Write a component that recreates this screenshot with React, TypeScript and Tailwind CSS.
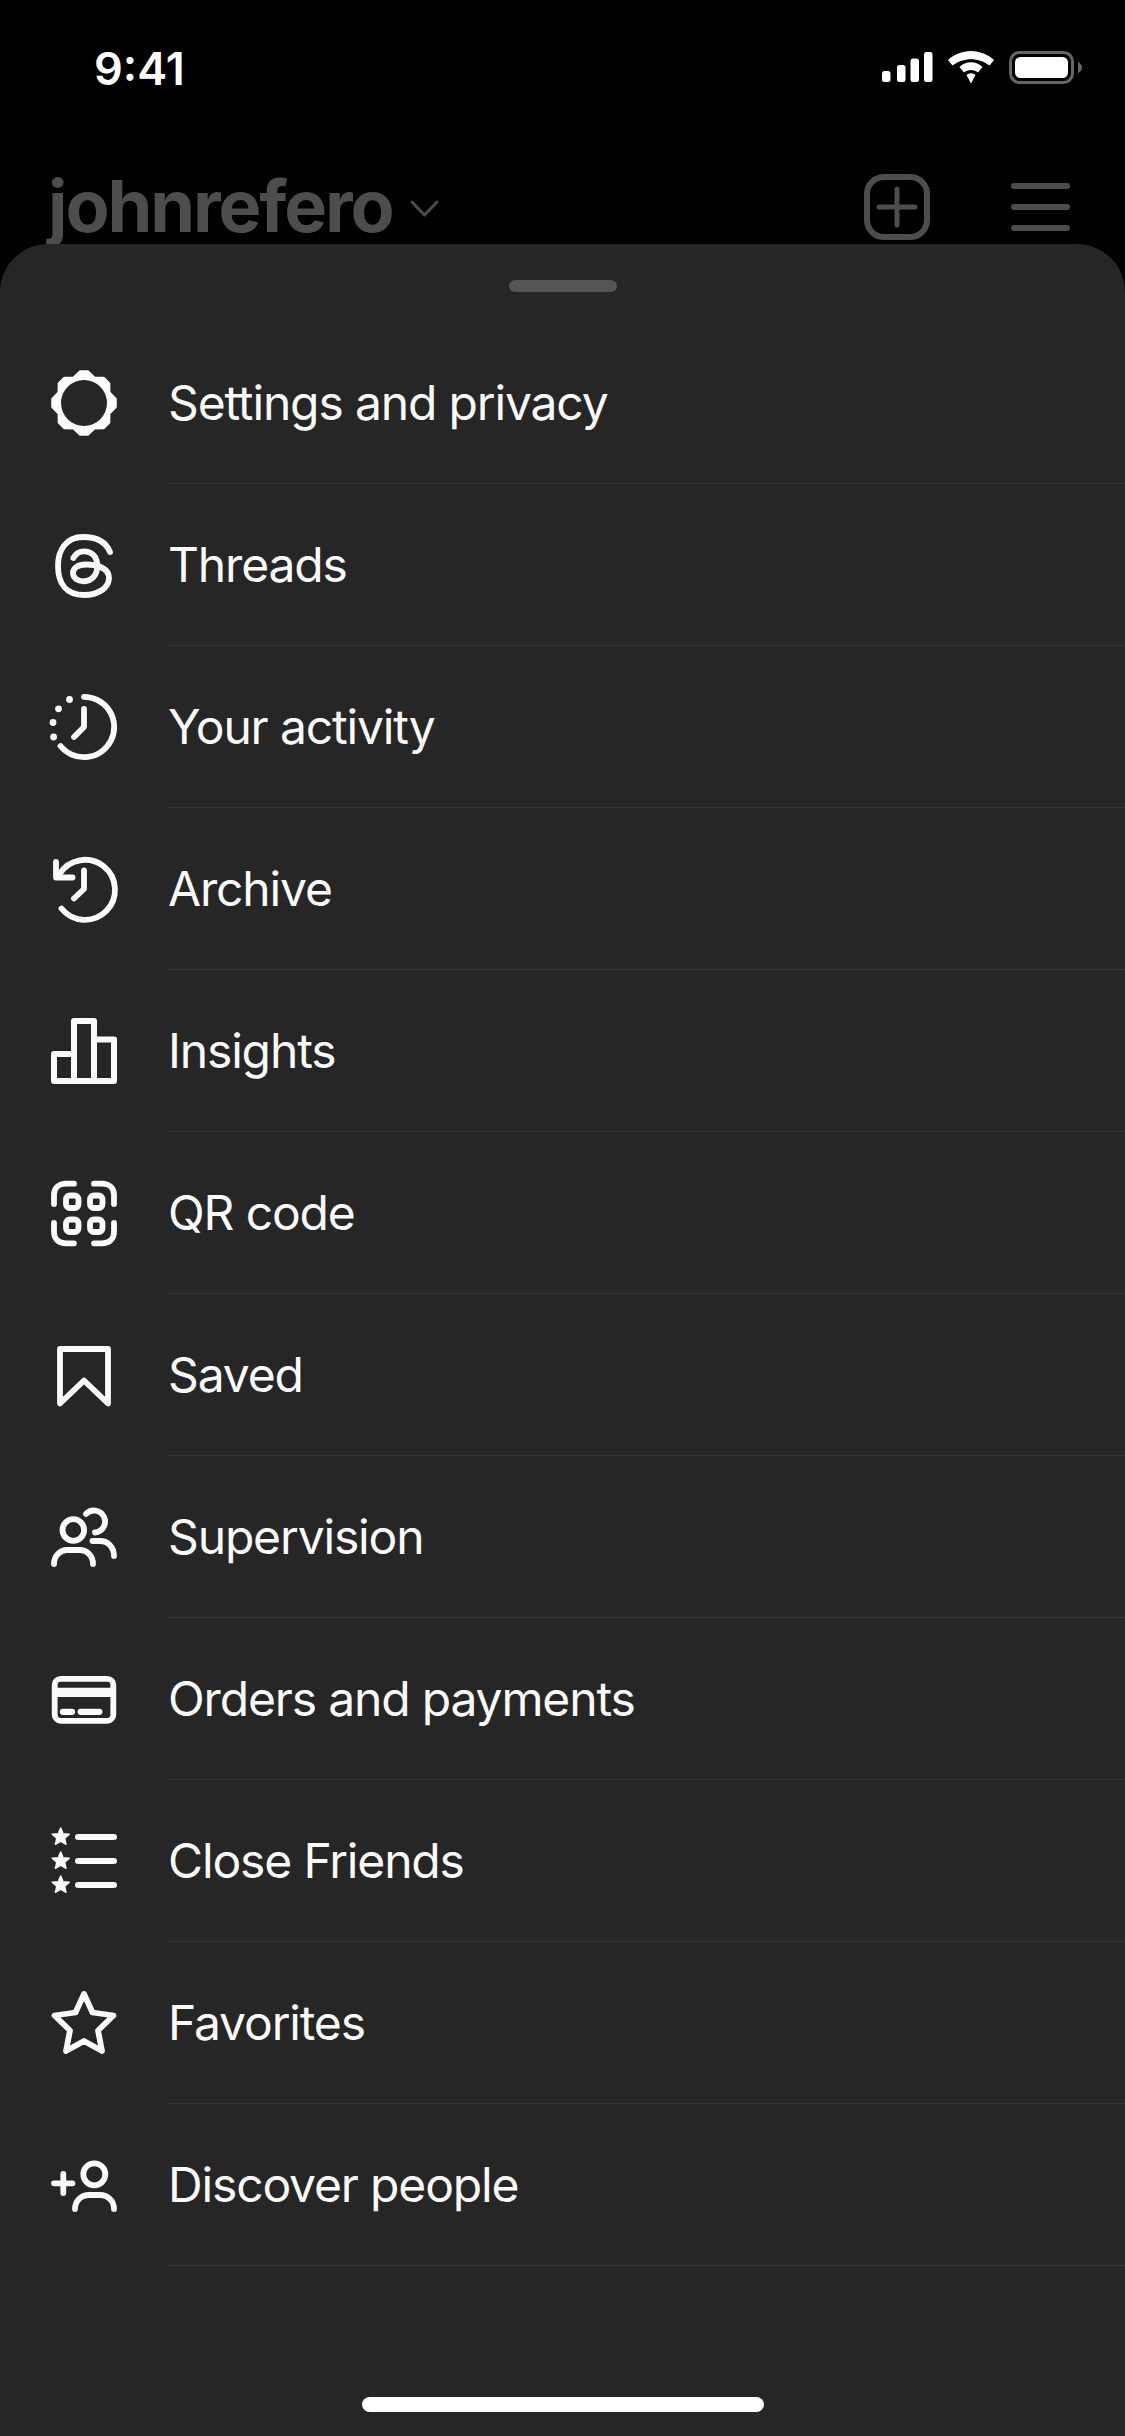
import React from "react";

const S = ({ children }: { children: React.ReactNode }) => (
  <svg width="66" height="66" viewBox="0 0 66 66" fill="none" stroke="#fafafa" strokeWidth="5.8" strokeLinecap="round" strokeLinejoin="round" className="shrink-0 overflow-visible">
    {children}
  </svg>
);

const starPts = (cx: number, cy: number, r: number) => {
  const pts: string[] = [];
  for (let i = 0; i < 10; i++) {
    const a = (-90 + i * 36) * (Math.PI / 180);
    const rr = i % 2 === 0 ? r : r * 0.45;
    pts.push(`${(cx + rr * Math.cos(a)).toFixed(2)},${(cy + rr * Math.sin(a)).toFixed(2)}`);
  }
  return pts.join(" ");
};

const gearPts = () => {
  const pts: string[] = [];
  const add = (deg: number, r: number) => {
    const a = (deg - 90) * (Math.PI / 180);
    pts.push(`${(33 + r * Math.cos(a)).toFixed(2)},${(33 + r * Math.sin(a)).toFixed(2)}`);
  };
  for (let i = 0; i < 8; i++) {
    const c = i * 45;
    add(c - 7, 31.5);
    add(c + 7, 31.5);
    add(c + 22.5, 27);
  }
  return pts.join(" ");
};

const icons: Record<string, React.ReactNode> = {
  settings: (
    <S>
      <polygon points={gearPts()} fill="#fafafa" strokeWidth="3" />
      <circle cx="33" cy="33" r="23" fill="#262626" stroke="none" />
    </S>
  ),
  threads: (
    <S>
      <path d="M59 20C55 10 45 5 32 5C15 5 7 18 7 34C7 51 15 63 33 63C47 63 58 56 58 46C58 37 48 32.500 35 32.500C27 32.500 22 36 22 41C22 46 27 49.300 32 49.300C41 49.300 46.300 43 46.300 34C46.300 25 41 19.300 33 19.300C28 19.300 24.500 22 22.300 26" />
    </S>
  ),
  activity: (
    <S>
      <path d="M33 2.800A30.200 30.200 0 1 1 9.500 52" />
      <path d="M33 15V33L23 43" />
      <g fill="#fafafa" stroke="none">
        <circle cx="18.500" cy="5.500" r="3.400" />
        <circle cx="7.500" cy="14.800" r="3.400" />
        <circle cx="2" cy="28.500" r="3.400" />
        <circle cx="2.600" cy="43" r="3.400" />
      </g>
    </S>
  ),
  archive: (
    <S>
      <path d="M8.500 18A30 30 0 1 1 10.500 52.500" />
      <path d="M5 6V21.500H21.500" />
      <path d="M33 14.500V33L23 42.500" />
    </S>
  ),
  insights: (
    <S>
      <path strokeWidth="6" d="M3 36H23V3H43V21.500H63V63H3ZM23 36V63M43 21.500V63" />
    </S>
  ),
  qr: (
    <S>
      <path d="M3 24V15C3 8 8 3.700 15 3.700H23M43 3.700H51C58 3.700 63 8 63 15V24M3 43V52C3 59 8 63.300 15 63.300H23M43 63.300H51C58 63.300 63 59 63 52V43" />
      <rect x="15" y="15.500" width="12.500" height="12.500" rx="4" />
      <rect x="39" y="15.500" width="12.500" height="12.500" rx="4" />
      <rect x="15" y="39.500" width="12.500" height="12.500" rx="4" />
      <rect x="39" y="39.500" width="12.500" height="12.500" rx="4" />
    </S>
  ),
  saved: (
    <S>
      <path d="M9 7H57V61.500L33 38.500L9 61.500Z" />
    </S>
  ),
  supervision: (
    <S>
      <circle cx="22.300" cy="26" r="10.800" />
      <path d="M35 10A11 11 0 1 1 44 28.500" />
      <path d="M3 60C3 52 9 46 16 46H29C36 46 42 52 42 60" />
      <path d="M41.500 37H49C57 37 63 43 63 52" />
    </S>
  ),
  orders: (
    <S>
      <rect x="3.700" y="12.800" width="58.600" height="42" rx="6" />
      <path d="M3.700 26.400H62.300" strokeWidth="9.300" strokeLinecap="butt" />
      <path d="M12 45.800H21M29.700 45.800H48.300" strokeWidth="6.300" />
    </S>
  ),
  friends: (
    <S>
      <polygon points={starPts(9.7, 9, 9)} fill="#fafafa" strokeWidth="1.500" />
      <polygon points={starPts(9.7, 33, 9)} fill="#fafafa" strokeWidth="1.500" />
      <polygon points={starPts(9.7, 57, 9)} fill="#fafafa" strokeWidth="1.500" />
      <path d="M27 9H63M27 33H63M27 57H63" strokeWidth="6" />
    </S>
  ),
  favorites: (
    <S>
      <path d="M33 4L41.500 22.500L62.500 25.500L47 40.500L51 61L33 51L15 61L19 40.500L3.500 25.500L24.500 22.500Z" />
    </S>
  ),
  discover: (
    <S>
      <circle cx="43.300" cy="22.300" r="11" />
      <path d="M24 57C24 49 30 43 38 43H49C57 43 63 49 63 57" />
      <path d="M3 31.300H21.500M12.300 22V41" />
    </S>
  ),
};

const rows: [string, string][] = [
  ["settings", "Settings and privacy"],
  ["threads", "Threads"],
  ["activity", "Your activity"],
  ["archive", "Archive"],
  ["insights", "Insights"],
  ["qr", "QR code"],
  ["saved", "Saved"],
  ["supervision", "Supervision"],
  ["orders", "Orders and payments"],
  ["friends", "Close Friends"],
  ["favorites", "Favorites"],
  ["discover", "Discover people"],
];

export default function App() {
  return (
    <div className="w-[1125px] h-[2436px] bg-black flex flex-col overflow-hidden font-['Inter','Liberation_Sans',sans-serif]">
      <header className="h-[244px] shrink-0 overflow-hidden">
        <div className="h-[138px] flex justify-between pl-[94px] pr-[43px] pt-[42px]">
          <span className="text-[45px] leading-[54px] font-semibold text-white">9:41</span>
          <svg width="200" height="34" viewBox="0 0 200 34" className="mt-[9px]" fill="#fff">
            <rect x="0" y="20" width="8.500" height="11" rx="2.500" />
            <rect x="15" y="14" width="8.500" height="17" rx="2.500" />
            <rect x="28.500" y="7.500" width="8.500" height="23.500" rx="2.500" />
            <rect x="42" y="1" width="8.500" height="30" rx="2.500" />
            <path d="M89 0C80 0 72 3.500 66 9L70.500 14.500C75.500 10.500 82 8.200 89 8.200C96 8.200 102.500 10.500 107.500 14.500L112 9C106 3.500 98 0 89 0Z" />
            <path d="M89 11.300C84.500 11.300 80.500 13 77.500 16L82 21.500C83.800 19.900 86.300 19 89 19C91.700 19 94.200 19.900 96 21.500L100.500 16C97.500 13 93.500 11.300 89 11.300Z" />
            <path d="M89 22.300C87.200 22.300 85.700 23 84.500 24L89 32.500L93.500 24C92.300 23 90.800 22.300 89 22.300Z" />
            <rect x="128.500" y="1.500" width="62" height="30" rx="9" fill="none" stroke="#666" strokeWidth="3" />
            <rect x="133" y="6" width="53" height="21" rx="5.500" />
            <path d="M196 11C198.500 12 200 14 200 16.500C200 19 198.500 21 196 22Z" fill="#666" />
          </svg>
        </div>
        <div className="flex justify-between items-start pl-[48px] pr-[55px]">
          <div className="flex items-start">
            <span className="text-[72px] leading-[87px] font-bold text-[#4d4d4d] tracking-[-2.1px] mt-[24px]">johnrefero</span>
            <svg width="29" height="17" viewBox="0 0 29 17" fill="none" stroke="#4d4d4d" strokeWidth="3" strokeLinecap="round" strokeLinejoin="round" className="ml-[17px] mt-[62px]">
              <path d="M2 2L14.500 15L27 2" />
            </svg>
          </div>
          <div className="flex items-start">
            <svg width="66" height="66" viewBox="0 0 66 66" fill="none" stroke="#4d4d4d" strokeWidth="6" strokeLinecap="round" className="mt-[36px]">
              <rect x="3" y="3" width="60" height="60" rx="17" />
              <path d="M33 15V51M15 33H51" strokeWidth="5" />
            </svg>
            <div className="ml-[81px] mt-[45px] w-[59px] flex flex-col gap-[15px]">
              <div className="h-[6px] rounded-full bg-[#4d4d4d]" />
              <div className="h-[6px] rounded-full bg-[#4d4d4d]" />
              <div className="h-[6px] rounded-full bg-[#4d4d4d]" />
            </div>
          </div>
        </div>
      </header>
      <main className="flex-1 bg-[#262626] rounded-t-[48px] flex flex-col relative">
        <div className="mt-[36px] mb-[30px] mx-auto w-[108px] h-[12px] rounded-full bg-[#555555]" />
        {rows.map(([k, label]) => (
          <div key={k} className="h-[162px] flex items-stretch pl-[51px]">
            <div className="flex items-center">{icons[k]}</div>
            <div className="ml-[51px] flex-1 flex items-center border-b border-[#363636]">
              <span className="text-[48px] text-[#fafafa] leading-[58px] tracking-[-1.15px]">{label}</span>
            </div>
          </div>
        ))}
        <div className="absolute bottom-[24px] left-[362px] w-[402px] h-[15px] rounded-full bg-white" />
      </main>
    </div>
  );
}
